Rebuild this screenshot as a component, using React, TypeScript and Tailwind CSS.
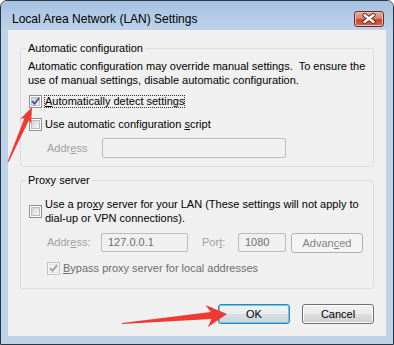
import React from 'react';

const font = "font-['Liberation_Sans',Arial,sans-serif]";

const Check = ({ checked, disabled }: { checked?: boolean; disabled?: boolean }) => (
    <span
        className={`relative flex h-[13px] w-[13px] shrink-0 items-center justify-center border ${
            disabled ? 'border-[#c2c2c2] bg-[#f6f6f6]' : 'border-[#8e8f8f] bg-white'
        }`}
    >
        <span
            className={`h-[9px] w-[9px] border ${
                disabled
                    ? 'border-[#e3e3e3] bg-[#f4f4f4]'
                    : 'border-[#b7bcc2] bg-gradient-to-br from-[#cdd1d7] to-[#f7f7f7]'
            }`}
        />
        {checked && (
            <svg className="absolute left-0 top-0" width="11" height="11" viewBox="0 0 11 11">
                <path
                    d="M2.2 5.2 L4.6 7.8 L9 2.2"
                    fill="none"
                    stroke={disabled ? '#a3a3a3' : '#4b5e96'}
                    strokeWidth="2"
                />
            </svg>
        )}
    </span>
);

const Btn = ({
    children,
    isDefault,
    disabled,
}: {
    children: React.ReactNode;
    isDefault?: boolean;
    disabled?: boolean;
}) => {
    let look =
        'border-[#707070] bg-[linear-gradient(#f2f2f2_0%,#ebebeb_48%,#dddddd_52%,#cfcfcf_100%)] shadow-[inset_0_0_0_1px_#fbfbfb] text-black';
    if (isDefault)
        look =
            'border-[#3c7fb1] bg-[linear-gradient(#f0f4f7_0%,#e8edf1_48%,#d8dfe5_52%,#ccd4da_100%)] shadow-[inset_0_0_0_1px_#5fcdf2] text-black';
    if (disabled) look = 'border-[#adb2b5] bg-[#f4f4f4] text-[#838383]';
    return (
        <div className={`flex h-[20px] w-[72px] items-center justify-center rounded-[3px] border text-[11px] ${look}`}>
            {children}
        </div>
    );
};

const Field = ({ value, className }: { value?: string; className: string }) => (
    <div
        className={`flex h-[19px] items-center rounded-[2px] border border-[#bcbcbc] bg-[#f0f0f0] px-[6px] text-[11px] text-[#6d6d6d] ${className}`}
    >
        {value}
    </div>
);

export default function App() {
    return (
        <div className={`relative h-[345px] w-[394px] bg-white text-black ${font}`}>
            <div className="flex h-[345px] w-[394px] flex-col overflow-hidden rounded-t-[7px] border border-[#2b3644] bg-[#bcd3ea]">
                {/* Title bar */}
                <div className="flex h-[29px] shrink-0 items-center bg-gradient-to-b from-[#a6c2e0] to-[#bdd3eb] pl-[11px] pr-[9px] pt-[6px]">
                    <span className="text-[12px] leading-[16px]">Local Area Network (LAN) Settings</span>
                    <div className="ml-auto flex h-[16px] w-[30px] items-center justify-center rounded-[3px] border border-[#6b2b23] bg-[linear-gradient(#e8aa9c_0%,#d98474_45%,#c8452f_55%,#d0644e_100%)] shadow-[inset_0_0_0_1px_#eebcb0]">
                        <svg width="14" height="11" viewBox="0 0 14 11">
                            <path d="M2.5 2 L11.5 9 M11.5 2 L2.5 9" stroke="#5a2a24" strokeWidth="4.2" strokeLinecap="round" />
                            <path d="M2.5 2 L11.5 9 M11.5 2 L2.5 9" stroke="#fff" strokeWidth="2.4" strokeLinecap="round" />
                        </svg>
                    </div>
                </div>

                {/* Client area */}
                <div className="mx-[7px] h-[306px] shrink-0 bg-[#f0f0f0] px-[12px] pt-[10px] text-[11px]">
                    <fieldset className="rounded-[3px] border border-[#d5dfe5] px-[5px] pb-[8px]">
                        <legend className="px-[2px] leading-[16px]">Automatic configuration</legend>
                        <div className="ml-[2px] pt-[3px] leading-[14px]">
                            <p>Automatic configuration may override manual settings.&nbsp; To ensure the</p>
                            <p>use of manual settings, disable automatic configuration.</p>
                        </div>
                        <div className="ml-[3px] mt-[7px] flex h-[15px] items-center">
                            <Check checked />
                            <span className="ml-[2px] border border-dotted border-[#333] leading-[11px]">
                                <u className="underline-offset-1">A</u>utomatically detect settings
                            </span>
                        </div>
                        <div className="ml-[3px] mt-[8px] flex h-[15px] items-center">
                            <Check />
                            <span className="ml-[3px] leading-[15px]">
                                Use automatic configuration <u>s</u>cript
                            </span>
                        </div>
                        <div className="ml-[21px] mt-[6px] flex h-[20px] items-center">
                            <span className="w-[55px] text-[#a0a0a0]">
                                Addr<u>e</u>ss
                            </span>
                            <Field className="h-[20px] w-[184px]" />
                        </div>
                    </fieldset>

                    <fieldset className="mt-[5px] rounded-[3px] border border-[#d5dfe5] px-[5px] pb-[12px]">
                        <legend className="px-[2px] leading-[16px]">Proxy server</legend>
                        <div className="ml-[3px] mt-[9px] flex items-center">
                            <Check />
                            <div className="ml-[3px] leading-[14px]">
                                <p>
                                    Use a pro<u>x</u>y server for your LAN (These settings will not apply to
                                </p>
                                <p>dial-up or VPN connections).</p>
                            </div>
                        </div>
                        <div className="ml-[21px] mt-[8px] flex items-start">
                            <span className="flex h-[19px] w-[54px] items-center text-[#a0a0a0]">
                                Addr<u>e</u>ss:
                            </span>
                            <Field className="w-[87px]" value="127.0.0.1" />
                            <span className="ml-[14px] flex h-[19px] w-[36px] items-center text-[#a0a0a0]">
                                Por<u>t</u>:
                            </span>
                            <Field className="w-[48px]" value="1080" />
                            <div className="ml-[5px]">
                                <Btn disabled>
                                    <span>
                                        Advan<u>c</u>ed
                                    </span>
                                </Btn>
                            </div>
                        </div>
                        <div className="ml-[21px] mt-[8px] flex h-[15px] items-center">
                            <Check checked disabled />
                            <span className="ml-[3px] leading-[15px] text-[#6d6d6d]">
                                <u>B</u>ypass proxy server for local addresses
                            </span>
                        </div>
                    </fieldset>

                    <div className="mt-[15px] flex justify-end gap-[12px]">
                        <Btn isDefault>OK</Btn>
                        <Btn>Cancel</Btn>
                    </div>
                </div>

                <div className="flex-1" />
            </div>

            {/* red annotation arrows */}
            <svg className="pointer-events-none absolute left-0 top-0" width="394" height="345" viewBox="0 0 394 345">
                <polygon
                    points="7.5,161.8 24.5,117.9 20.1,119.3 32,107 31.1,124.1 29.1,119.9 8.5,162.2"
                    fill="#ee3a32"
                />
                <polygon
                    points="121.9,322.9 210.8,311.9 205.5,305 227,314 208,327 211.4,318.9 122.1,324.1"
                    fill="#ee3a32"
                />
            </svg>
        </div>
    );
}
